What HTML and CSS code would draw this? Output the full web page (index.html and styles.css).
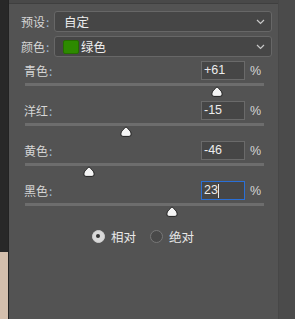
FILE: index.html
```html
<!DOCTYPE html>
<html lang="zh">
<head>
<meta charset="utf-8">
<link rel="stylesheet" href="styles.css">
</head>
<body>
<div class="app">
  <div class="side">
    <div class="side-dark"></div>
    <div class="side-photo"></div>
  </div>
  <div class="panel">
    <div class="topbar"></div>
    <div class="dd-row first">
      <span class="lbl">预设<i>:</i></span>
      <div class="dd">
        <span class="dd-text">自定</span>
        <svg class="chev" width="9" height="6" viewBox="0 0 9 6"><path d="M1 1 L4.5 4.5 L8 1" fill="none" stroke="#c9c9c9" stroke-width="1.2"/></svg>
      </div>
    </div>
    <div class="dd-row">
      <span class="lbl">颜色<i>:</i></span>
      <div class="dd">
        <span class="swatch"></span>
        <span class="dd-text tight">绿色</span>
        <svg class="chev" width="9" height="6" viewBox="0 0 9 6"><path d="M1 1 L4.5 4.5 L8 1" fill="none" stroke="#c9c9c9" stroke-width="1.2"/></svg>
      </div>
    </div>

    <div class="sliders">
      <div class="srow">
        <div class="head"><span class="slbl">青色<i>:</i></span><span class="inp">+61</span><span class="pct">%</span></div>
        <div class="track"><svg class="thumb" style="left:192px" width="12" height="11" viewBox="0 0 12 11"><path d="M6 0.8 C8 3 11.2 5 11.2 8 Q11.2 10.4 9 10.4 L3 10.4 Q0.8 10.4 0.8 8 C0.8 5 4 3 6 0.8 Z" fill="#f4f4f4" stroke="#1e1e1e" stroke-width="1"/></svg></div>
      </div>
      <div class="srow">
        <div class="head"><span class="slbl">洋红<i>:</i></span><span class="inp">-15</span><span class="pct">%</span></div>
        <div class="track"><svg class="thumb" style="left:101px" width="12" height="11" viewBox="0 0 12 11"><path d="M6 0.8 C8 3 11.2 5 11.2 8 Q11.2 10.4 9 10.4 L3 10.4 Q0.8 10.4 0.8 8 C0.8 5 4 3 6 0.8 Z" fill="#f4f4f4" stroke="#1e1e1e" stroke-width="1"/></svg></div>
      </div>
      <div class="srow">
        <div class="head"><span class="slbl">黄色<i>:</i></span><span class="inp">-46</span><span class="pct">%</span></div>
        <div class="track"><svg class="thumb" style="left:64px" width="12" height="11" viewBox="0 0 12 11"><path d="M6 0.8 C8 3 11.2 5 11.2 8 Q11.2 10.4 9 10.4 L3 10.4 Q0.8 10.4 0.8 8 C0.8 5 4 3 6 0.8 Z" fill="#f4f4f4" stroke="#1e1e1e" stroke-width="1"/></svg></div>
      </div>
      <div class="srow">
        <div class="head"><span class="slbl">黑色<i>:</i></span><span class="inp active">23<b class="caret"></b></span><span class="pct">%</span></div>
        <div class="track"><svg class="thumb" style="left:147px" width="12" height="11" viewBox="0 0 12 11"><path d="M6 0.8 C8 3 11.2 5 11.2 8 Q11.2 10.4 9 10.4 L3 10.4 Q0.8 10.4 0.8 8 C0.8 5 4 3 6 0.8 Z" fill="#f4f4f4" stroke="#1e1e1e" stroke-width="1"/></svg></div>
      </div>
    </div>

    <div class="radios">
      <label class="radio"><span class="dot on"></span><span>相对</span></label>
      <label class="radio"><span class="dot"></span><span>绝对</span></label>
    </div>
  </div>
  <div class="scroll"></div>
</div>
</body>
</html>
```

FILE: styles.css
```css
* { box-sizing: border-box; }
html, body { margin: 0; padding: 0; }
body {
  width: 295px;
  height: 319px;
  overflow: hidden;
  background: #535353;
  font-family: "Noto Sans CJK SC", "Noto Sans", sans-serif;
  font-size: 12px;
  color: #dcdcdc;
}
.app { display: flex; height: 319px; }

.side { width: 9px; display: flex; flex-direction: column; border-right: 1px solid #232323; }
.side-dark { height: 252px; background: #282828; }
.side-photo { flex: 1; background: #d4bfad; }

.panel { width: 270px; background: #535353; border-right: 1px solid #474747; }
.topbar { height: 4px; background: #494949; border-bottom: 1px solid #3f3f3f; }

.dd-row { display: flex; align-items: center; height: 21px; margin-top: 4px; }
.dd-row.first { margin-top: 7px; }
.lbl { width: 45px; padding-left: 12px; line-height: 21px; color: #d6d6d6; white-space: nowrap; }
.lbl i, .slbl i { font-style: normal; color: #9bb6d6; margin-left: 1px; }
.dd {
  width: 218px; height: 21px;
  display: flex; align-items: center;
  background: #464646;
  border: 1px solid #676767;
  border-radius: 3px;
  padding: 0 6px 0 9px;
}
.dd-text { flex: 1; color: #ececec; font-size: 12.5px; line-height: 19px; }
.dd-text.tight { margin-left: 2px; }
.swatch { width: 16px; height: 14px; background: #2d8a00; border: 1px solid #246d00; border-radius: 2px; margin-left: -1px; }
.chev { display: block; }

.sliders { margin-top: 4px; }
.srow { height: 40px; }
.head { display: flex; align-items: center; height: 19px; }
.slbl { flex: 1; padding-left: 15px; color: #d6d6d6; line-height: 19px; }
.inp {
  width: 44px; height: 19px;
  background: #464646;
  border: 1px solid #6a6a6a;
  color: #ececec;
  font-family: "Liberation Sans", "Noto Sans", sans-serif;
  font-size: 12.5px;
  line-height: 17px;
  padding-left: 2px;
  display: flex; align-items: center;
}
.inp.active { border-color: #2a6fd6; }
.caret { display: inline-block; width: 1px; height: 14px; background: #e8e8e8; margin-left: 0; }
.pct { width: 33px; padding-left: 5px; color: #d6d6d6; font-family: "Liberation Sans", sans-serif; font-size: 12.5px; }

.track { position: relative; margin: 3px 0 0 16px; width: 239px; height: 3px; background: #6d6d6d; }
.thumb { position: absolute; top: 3px; margin-left: -6px; display: block; }

.radios { display: flex; align-items: center; gap: 14px; height: 16px; margin-top: 7px; padding-left: 83px; }
.radio { display: flex; align-items: center; gap: 6px; color: #e8e8e8; font-size: 12.5px; }
.dot { width: 13px; height: 13px; border-radius: 50%; border: 1.5px solid #777; background: #494949; position: relative; }
.dot.on { background: #d9d9d9; border-color: #cfcfcf; }
.dot.on::after { content: ""; position: absolute; left: 3px; top: 3px; width: 4px; height: 4px; border-radius: 50%; background: #333; }

.scroll { flex: 1; background: #4b4b4b; }
```
